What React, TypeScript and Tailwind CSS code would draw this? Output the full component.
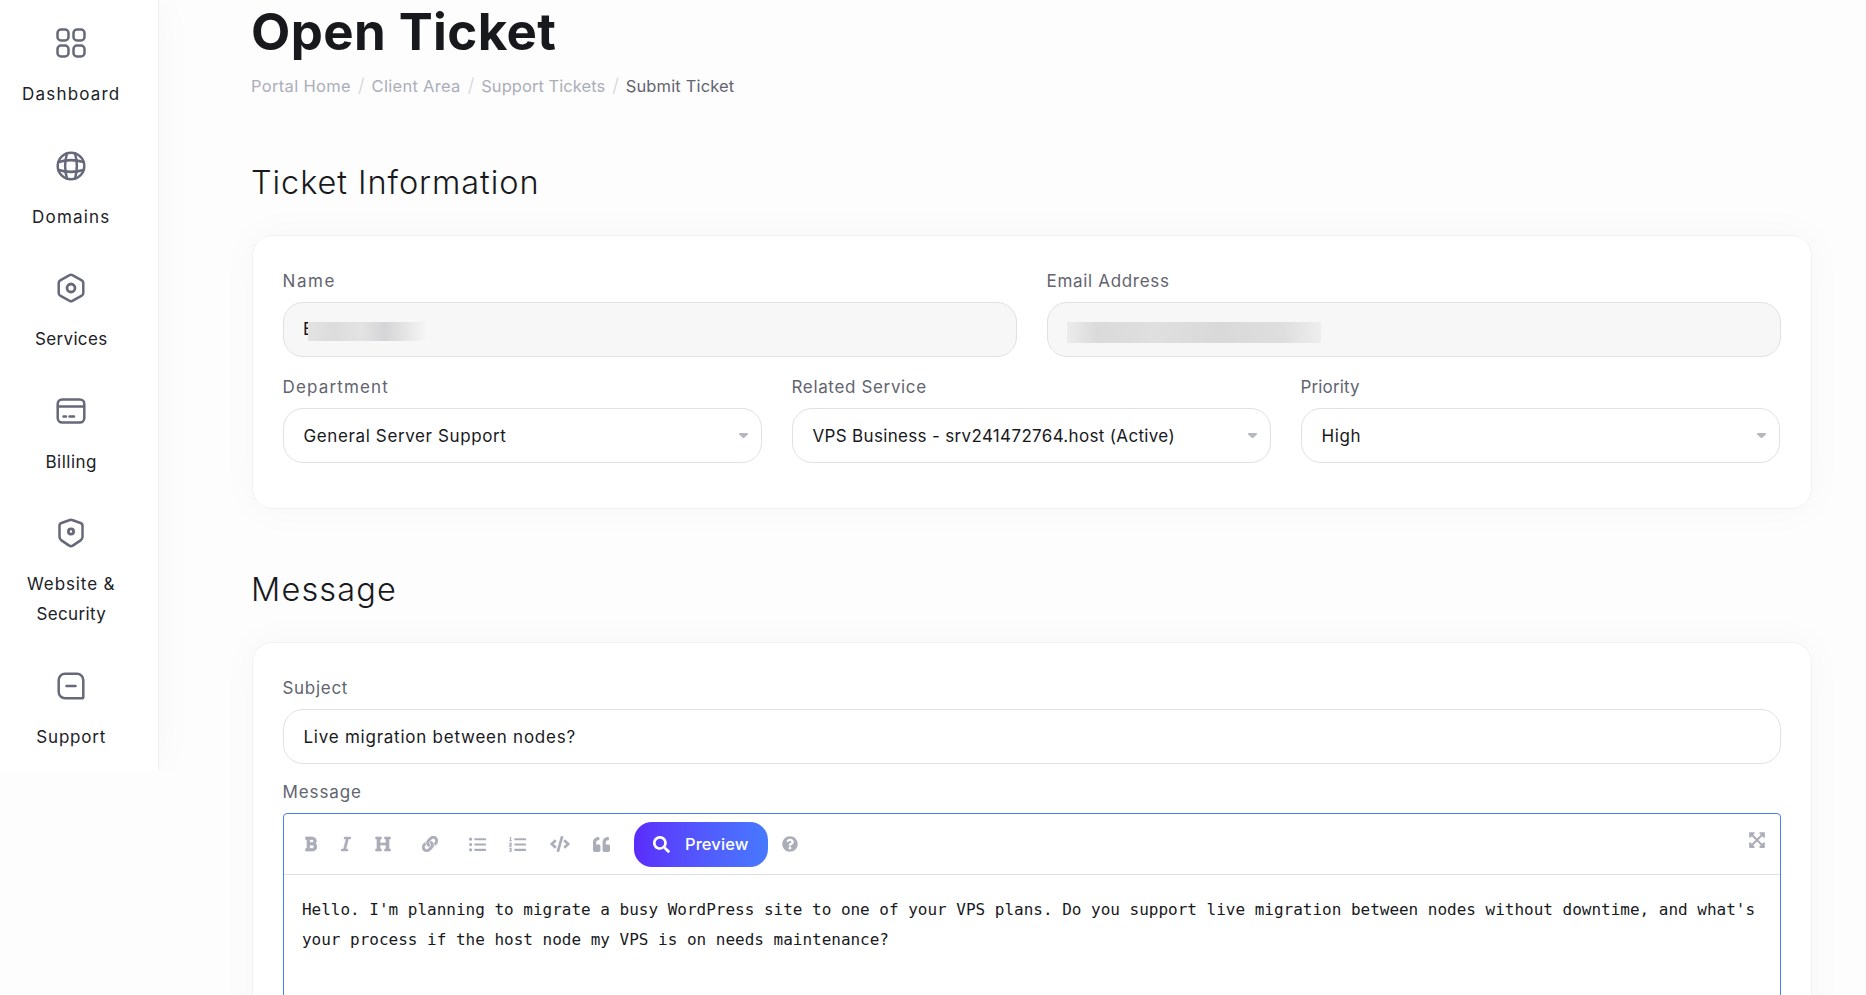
import type { ReactNode } from "react";
import {
  FaBold,
  FaCode,
  FaExpandArrowsAlt,
  FaHeading,
  FaItalic,
  FaLink,
  FaListOl,
  FaListUl,
  FaQuestionCircle,
  FaQuoteLeft,
  FaSearch,
} from "react-icons/fa";

const navItems = [
  {
    lines: [{ text: "Dashboard", tracking: "tracking-[1.2px]" }],
    icon: (
      <>
        <rect x="1.5" y="1.5" width="11" height="11" rx="3.5" />
        <rect x="17.5" y="1.5" width="11" height="11" rx="3.5" />
        <rect x="1.5" y="17.5" width="11" height="11" rx="3.5" />
        <rect x="17.5" y="17.5" width="11" height="11" rx="3.5" />
      </>
    ),
  },
  {
    lines: [{ text: "Domains", tracking: "tracking-[1.2px]" }],
    icon: (
      <>
        <circle cx="15" cy="15" r="13.3" />
        <path d="M11 2.5C8.6 10.5 8.6 19.5 11 27.5M19 2.5C21.4 10.5 21.4 19.5 19 27.5" />
        <path d="M2.5 11C10.5 8.6 19.5 8.6 27.5 11M2.5 19C10.5 21.4 19.5 21.4 27.5 19" />
      </>
    ),
  },
  {
    lines: [{ text: "Services", tracking: "tracking-[0.35px]" }],
    icon: (
      <>
        <path d="M13.6 2.2a3 3 0 0 1 2.8 0l9.4 5.1a3 3 0 0 1 1.500 2.600v10.200a3 3 0 0 1-1.500 2.600l-9.400 5.100a3 3 0 0 1-2.800 0l-9.400-5.100a3 3 0 0 1-1.500-2.600V9.900a3 3 0 0 1 1.500-2.600z" />
        <circle cx="15" cy="15" r="4" strokeWidth="2.8" />
      </>
    ),
  },
  {
    lines: [{ text: "Billing", tracking: "tracking-[0.5px]" }],
    icon: (
      <>
        <rect x="1.7" y="3.4" width="26.6" height="23.2" rx="4.5" />
        <path d="M2 10.5h26M7.5 20.5h2.5M13.5 20.5h4.5" />
      </>
    ),
  },
  {
    lines: [
      { text: "Website &", tracking: "tracking-[0.9px]" },
      { text: "Security", tracking: "tracking-[0.35px]" },
    ],
    icon: (
      <>
        <path d="M13.9 2a3 3 0 0 1 2.200 0l8.400 3a3 3 0 0 1 2 2.800v11c0 1.500-.600 2.700-1.900 3.600l-7.800 5.200a3 3 0 0 1-3.600 0l-7.800-5.200c-1.300-.900-1.900-2.100-1.900-3.600v-11a3 3 0 0 1 2-2.800z" />
        <circle cx="15" cy="13.5" r="2.6" strokeWidth="2.8" />
      </>
    ),
  },
  {
    lines: [{ text: "Support", tracking: "tracking-[0.8px]" }],
    icon: (
      <>
        <path d="M9 2.7h12a6.3 6.3 0 0 1 6.3 6.3v17a1.3 1.3 0 0 1-1.3 1.3H9A6.3 6.3 0 0 1 2.7 21V9A6.3 6.3 0 0 1 9 2.7z" />
        <path d="M10.5 15h9" />
      </>
    ),
  },
];

const breadcrumbs = [
  { label: "Portal Home", tracking: "tracking-[0.33px]" },
  { label: "Client Area", tracking: "tracking-[0.3px]" },
  { label: "Support Tickets", tracking: "tracking-[0.05px]" },
];

const toolbar = [
  { name: "Bold", icon: FaBold, cell: "w-[36px]", size: "h-4 w-3 stroke-[24px]" },
  { name: "Italic", icon: FaItalic, cell: "w-[34px]", size: "h-4 w-2.5 stroke-[12px]" },
  { name: "Heading", icon: FaHeading, cell: "w-[47px]", size: "size-4 stroke-[20px]" },
  { name: "Link", icon: FaLink, cell: "w-[47px]", size: "size-4 stroke-[16px]" },
  { name: "List", icon: FaListUl, cell: "w-[40px]", size: "size-[17px]" },
  { name: "Ordered", icon: FaListOl, cell: "w-[41px]", size: "size-[17px]" },
  { name: "Code", icon: FaCode, cell: "w-[43px]", size: "size-[20px]" },
  { name: "Quote", icon: FaQuoteLeft, cell: "w-[41px]", size: "size-[17px]" },
];

function Card({ title, tracking, children }: { title: string; tracking: string; children: ReactNode }) {
  return (
    <section>
      <h2 className={`-ml-px h-12 text-[32.5px] leading-[48px] font-light text-[#18191d] ${tracking}`}>
        {title}
      </h2>
      <div className="mt-[28px] rounded-[20px] border border-[#f2f2f3] bg-white px-[30px] pt-[30px] shadow-[0_0_40px_rgba(0,0,0,0.03)]">
        {children}
      </div>
    </section>
  );
}

function Field({ label, tracking, children }: { label: string; tracking: string; children: ReactNode }) {
  return (
    <div className="min-w-0 flex-1">
      <label className={`mb-[6px] -ml-[0.5px] block h-[30px] text-[17px] leading-[30px] text-[#62646f] ${tracking}`}>
        {label}
      </label>
      {children}
    </div>
  );
}

function Select({ value, tracking }: { value: string; tracking: string }) {
  return (
    <div className="flex h-[55px] items-center justify-between rounded-[20px] border border-[#e0e1e3] bg-white pr-[13px] pl-[19.5px]">
      <span className={`pt-[2px] text-[17px] text-[#18191d] ${tracking}`}>{value}</span>
      <svg className="h-[5px] w-[9px] text-[#b5b8c1]" viewBox="0 0 9 5" fill="currentColor">
        <path d="M.5 0h8a.4.4 0 0 1 .4.4v1.100L5.500 4.600a1.400 1.400 0 0 1-2 0L.1 1.500V.4A.4.4 0 0 1 .5 0z" />
      </svg>
    </div>
  );
}

export default function App() {
  return (
    <div className="flex h-[995px] w-[1866px] items-start overflow-hidden bg-[#fdfdfd] font-['Inter',sans-serif]">
      <aside className="h-[771px] w-[159px] shrink-0 border-r border-[#f0f0f1] bg-white pt-[28px] shadow-[0_0_40px_rgba(0,0,0,0.03)] [clip-path:inset(0_-60px_0_0)]">
        <nav className="flex w-[142.5px] flex-col items-center gap-[41.5px]">
          {navItems.map((item) => (
            <a key={item.lines[0].text} className="flex w-[120px] flex-col items-center">
              <svg
                className="mb-[21px] size-[30px] text-[#666979]"
                viewBox="0 0 30 30"
                fill="none"
                stroke="currentColor"
                strokeWidth="2.5"
                strokeLinecap="round"
              >
                {item.icon}
              </svg>
              {item.lines.map((line) => (
                <span key={line.text} className={`text-[17px] leading-[30px] text-[#202126] ${line.tracking}`}>
                  {line.text}
                </span>
              ))}
            </a>
          ))}
        </nav>
      </aside>

      <main className="ml-[93px] w-[1560px]">
        <h1 className="-ml-px h-[64px] text-[51px] leading-[64px] font-bold tracking-[0.4px] text-[#18191d]">
          Open Ticket
        </h1>
        <div className="mt-[7px] -ml-px flex h-[30px] items-center text-[16.5px] text-[#abaeb9]">
          {breadcrumbs.map((crumb) => (
            <div key={crumb.label} className="flex items-center">
              <span className={crumb.tracking}>{crumb.label}</span>
              <span className="w-[20.500px] text-center text-[19px] font-light text-[#d3d5da]">/</span>
            </div>
          ))}
          <span className="tracking-[0.15px] text-[#62646f]">Submit Ticket</span>
        </div>

        <div className="mt-[58px]">
          <Card title="Ticket Information" tracking="tracking-[0.93px]">
            <div className="flex gap-[30px]">
              <Field label="Name" tracking="tracking-[1.6px]">
                <div className="flex h-[55px] items-center rounded-[20px] border border-[#e0e1e3] bg-[#f7f7f7] pl-[19px]">
                  <span className="w-[11px] pt-px text-[17px] text-[#18191d]">E</span>
                  <div className="relative mt-[4px] -ml-[6px] h-[19px] w-[119px] bg-[linear-gradient(90deg,#e2e2e3_0%,#dcdcdd_22%,#e3e3e4_45%,#d5d5d7_64%,#e3e3e4_80%,#f7f7f7_100%)]" />
                </div>
              </Field>
              <Field label="Email Address" tracking="tracking-[0.68px]">
                <div className="flex h-[55px] items-center rounded-[20px] border border-[#e0e1e3] bg-[#f7f7f7] pl-[19px]">
                  <div className="mt-[6px] h-[21px] w-[254px] bg-[linear-gradient(90deg,#ececec_0%,#dadadb_12%,#dfdfe0_35%,#d9d9da_60%,#dededf_85%,#eeeeee_100%)]" />
                </div>
              </Field>
            </div>
            <div className="mt-[15px] mr-px flex gap-[30px] pb-[45px]">
              <Field label="Department" tracking="tracking-[1.15px]">
                <Select value="General Server Support" tracking="tracking-[0.62px]" />
              </Field>
              <Field label="Related Service" tracking="tracking-[0.65px]">
                <Select value="VPS Business - srv241472764.host (Active)" tracking="tracking-[0.33px]" />
              </Field>
              <Field label="Priority" tracking="tracking-[0.15px]">
                <Select value="High" tracking="tracking-[0.6px]" />
              </Field>
            </div>
          </Card>
        </div>

        <div className="mt-[57px]">
          <Card title="Message" tracking="tracking-[1.15px]">
            <Field label="Subject" tracking="tracking-[0.7px]">
              <div className="flex h-[55px] items-center rounded-[20px] border border-[#e0e1e3] bg-white pt-[2px] pl-[19.500px] text-[17px] tracking-[0.76px] text-[#18191d]">
                Live migration between nodes?
              </div>
            </Field>
            <div className="mt-[13px]">
              <Field label="Message" tracking="tracking-[0.9px]">
                <div className="h-[300px] rounded-[4px] border border-[#4a7dfa] bg-white">
                  <div className="flex h-[61px] items-center border-b border-[#dfe0e2] pl-[21px] text-[#abaeb9]">
                    {toolbar.map((tool) => {
                      const Icon = tool.icon;

                      return (
                        <div key={tool.name} className={`shrink-0 ${tool.cell}`}>
                          <Icon className={tool.size} />
                        </div>
                      );
                    })}
                    <button className="flex h-[45px] w-[134px] items-center gap-[15px] rounded-[18px] bg-gradient-to-r from-[#5a2afc] to-[#4679ff] pl-[19px] text-[16.5px] font-medium text-white">
                      <FaSearch className="size-[17px]" />
                      <span className="tracking-[0.1px]">Preview</span>
                    </button>
                    <FaQuestionCircle className="ml-[14px] size-[16px]" />
                    <FaExpandArrowsAlt className="mr-[14px] mb-[8px] ml-auto size-[18px]" />
                  </div>
                  <p className="pt-[20px] pl-[18px] font-['DejaVu_Sans_Mono',monospace] text-[16px] leading-[30px] tracking-[-0.01px] text-[#18191d]">
                    Hello. I'm planning to migrate a busy WordPress site to one of your VPS plans. Do you support
                    live migration between nodes without downtime, and what's
                    <br />
                    your process if the host node my VPS is on needs maintenance?
                  </p>
                </div>
              </Field>
            </div>
          </Card>
        </div>
      </main>
    </div>
  );
}
